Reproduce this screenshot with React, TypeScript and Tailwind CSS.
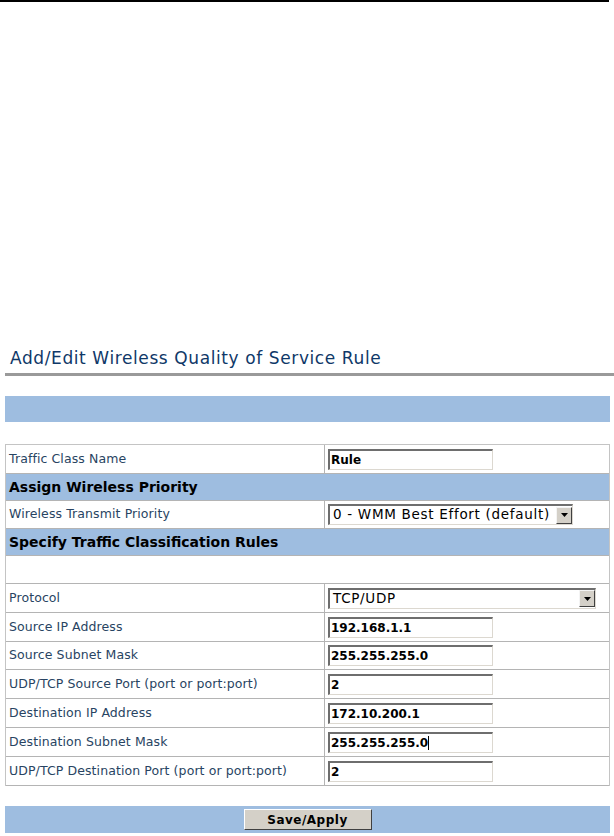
import React from 'react';

const FONT = "font-['DejaVu_Sans',Verdana,sans-serif]";

interface TextBoxProps {
  value: string;
  caret?: boolean;
}

const TextBox: React.FC<TextBoxProps> = ({ value, caret }) => (
  <div className="w-[165px] h-[21px] bg-white border-t-2 border-l-2 border-t-[#6e6e6e] border-l-[#6e6e6e] border-b border-r border-b-[#dcd8d0] border-r-[#dcd8d0] flex items-center pl-[1px]">
    <span className="text-[12px] font-bold text-black leading-none">{value}</span>
    {caret && <span className="w-px h-[14px] bg-black" />}
  </div>
);

interface SelectBoxProps {
  value: string;
  width: string;
}

const SelectBox: React.FC<SelectBoxProps> = ({ value, width }) => (
  <div className={`${width} h-[21px] bg-white border-t-2 border-l-2 border-t-[#6e6e6e] border-l-[#6e6e6e] border-b border-r border-b-[#dcd8d0] border-r-[#dcd8d0] flex items-center justify-between`}>
    <span className="pl-[3px] text-[13.5px] tracking-[0.7px] text-black leading-none whitespace-nowrap">{value}</span>
    <span className="w-[16px] h-[17px] shrink-0 bg-[#d4d0c8] border border-t-[#f4f4f4] border-l-[#f4f4f4] border-b-[#404040] border-r-[#404040] flex items-center justify-center">
      <svg width="7" height="4" viewBox="0 0 7 4">
        <path d="M0 0h7L3.5 4z" fill="#000" />
      </svg>
    </span>
  </div>
);

interface RowProps {
  label: string;
  children?: React.ReactNode;
  h?: string;
}

const Row: React.FC<RowProps> = ({ label, children, h = 'h-[29px]' }) => (
  <div className={`grid grid-cols-[319px_1fr] ${h} border-b border-[#b4b4b4]`}>
    <div className="border-r border-[#b4b4b4] flex items-center pl-[3px] text-[12.5px] tracking-[0.1px] text-[#284462]">
      {label}
    </div>
    <div className="flex items-center pl-[3px]">{children}</div>
  </div>
);

const Header: React.FC<{ title: string }> = ({ title }) => (
  <div className="h-[27px] bg-[#9ebde0] border-b border-[#b4b4b4] flex items-center pl-[3px] text-[14px] font-bold text-black">
    {title}
  </div>
);

export default function App() {
  return (
    <div className={`w-[614px] min-h-[836px] bg-white ${FONT}`}>
      <div className="w-[609px] h-[2px] bg-black" />

      {/* title */}
      <div className="pt-[345px] pl-[10px] text-[17px] tracking-[0.6px] text-[#0f3868] leading-[23px]">
        Add/Edit Wireless Quality of Service Rule
      </div>
      <div className="ml-[5px] mt-[3px] h-[3px] bg-[#9a9a9a]" />

      <div className="ml-[5px] mr-[4px] mt-[20px] h-[26px] bg-[#9ebde0]" />

      {/* form table */}
      <div className="ml-[5px] mr-[4px] mt-[22px] border-t border-l border-r border-[#c4c4c4]">
        <Row label="Traffic Class Name">
          <TextBox value="Rule" />
        </Row>
        <Header title="Assign Wireless Priority" />
        <Row label="Wireless Transmit Priority" h="h-[28px]">
          <SelectBox value="0 - WMM Best Effort (default)" width="w-[245px]" />
        </Row>
        <Header title="Specify Traffic Classification Rules" />
        <div className="h-[28px] border-b border-[#b4b4b4]" />
        <Row label="Protocol">
          <SelectBox value="TCP/UDP" width="w-[268px]" />
        </Row>
        <Row label="Source IP Address">
          <TextBox value="192.168.1.1" />
        </Row>
        <Row label="Source Subnet Mask" h="h-[28px]">
          <TextBox value="255.255.255.0" />
        </Row>
        <Row label="UDP/TCP Source Port (port or port:port)">
          <TextBox value="2" />
        </Row>
        <Row label="Destination IP Address">
          <TextBox value="172.10.200.1" />
        </Row>
        <Row label="Destination Subnet Mask">
          <TextBox value="255.255.255.0" caret />
        </Row>
        <Row label="UDP/TCP Destination Port (port or port:port)">
          <TextBox value="2" />
        </Row>
      </div>

      {/* save bar */}
      <div className="ml-[5px] mr-[4px] mt-[20px] h-[27px] bg-[#9ebde0] flex items-center justify-center">
        <button className="w-[128px] h-[21px] bg-[#d4d0c8] border border-t-white border-l-white border-b-[#404040] border-r-[#404040] text-[12px] font-bold text-black tracking-[0.5px]">
          Save/Apply
        </button>
      </div>
    </div>
  );
}
